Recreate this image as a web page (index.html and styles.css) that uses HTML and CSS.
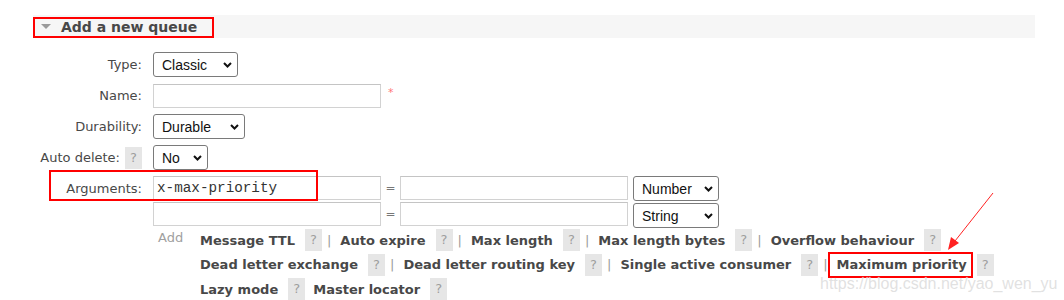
FILE: index.html
```
<!DOCTYPE html>
<html lang="en">
<head>
  <meta charset="UTF-8" />
  <title>Queues – Add a new queue</title>
  <meta name="viewport" content="width=device-width, initial-scale=1.0" />
  <link rel="stylesheet" href="styles.css">
</head>
<body>

  <div class="section">
    <div class="section-head">
      <span class="toggle"></span>
      <h2>Add a new queue</h2>
    </div>

    <form class="form">
      <div class="row">
        <label class="label" for="type">Type:</label>
        <span class="select" style="width: 85px">
          <select id="type"><option>Classic</option><option>Quorum</option></select>
          <svg class="chev" width="9" height="6" viewBox="0 0 9 6"><path d="M1 1 L4.5 4.5 L8 1" fill="none" stroke="#111" stroke-width="2"/></svg>
        </span>
      </div>

      <div class="row">
        <label class="label" for="name">Name:</label>
        <input class="text" type="text" id="name" />
        <span class="req">*</span>
      </div>

      <div class="row">
        <label class="label" for="durable">Durability:</label>
        <span class="select" style="width: 92px">
          <select id="durable"><option>Durable</option><option>Transient</option></select>
          <svg class="chev" width="9" height="6" viewBox="0 0 9 6"><path d="M1 1 L4.5 4.5 L8 1" fill="none" stroke="#111" stroke-width="2"/></svg>
        </span>
      </div>

      <div class="row">
        <label class="label" for="autodelete">Auto delete: <span class="help">?</span></label>
        <span class="select" style="width: 55px">
          <select id="autodelete"><option>No</option><option>Yes</option></select>
          <svg class="chev" width="9" height="6" viewBox="0 0 9 6"><path d="M1 1 L4.5 4.5 L8 1" fill="none" stroke="#111" stroke-width="2"/></svg>
        </span>
      </div>

      <div class="row row-args">
        <label class="label">Arguments:</label>
        <div class="args">
          <input class="text mono" type="text" value="x-max-priority" />
          <span class="eq">=</span>
          <input class="text" type="text" />
          <span class="select">
            <select><option>Number</option><option>String</option><option>Boolean</option><option>List</option></select>
            <svg class="chev" width="9" height="6" viewBox="0 0 9 6"><path d="M1 1 L4.5 4.5 L8 1" fill="none" stroke="#111" stroke-width="2"/></svg>
          </span>

          <input class="text" type="text" />
          <span class="eq">=</span>
          <input class="text" type="text" />
          <span class="select low">
            <select><option>String</option><option>Number</option><option>Boolean</option><option>List</option></select>
            <svg class="chev" width="9" height="6" viewBox="0 0 9 6"><path d="M1 1 L4.5 4.5 L8 1" fill="none" stroke="#111" stroke-width="2"/></svg>
          </span>
        </div>
      </div>

      <div class="opts">
        <span class="add">Add</span>
        <div class="opt-list">
          <div class="opt-row">
            <a class="opt">Message TTL</a><span class="help">?</span><span class="sep">|</span>
            <a class="opt">Auto expire</a><span class="help">?</span><span class="sep">|</span>
            <a class="opt">Max length</a><span class="help">?</span><span class="sep">|</span>
            <a class="opt">Max length bytes</a><span class="help">?</span><span class="sep">|</span>
            <a class="opt">Overflow behaviour</a><span class="help">?</span>
          </div>
          <div class="opt-row">
            <a class="opt">Dead letter exchange</a><span class="help">?</span><span class="sep">|</span>
            <a class="opt">Dead letter routing key</a><span class="help">?</span><span class="sep">|</span>
            <a class="opt">Single active consumer</a><span class="help">?</span><span class="sep">|</span>
            <a class="opt">Maximum priority</a><span class="help">?</span>
          </div>
          <div class="opt-row">
            <a class="opt">Lazy mode</a><span class="help gap">?</span>
            <a class="opt">Master locator</a><span class="help">?</span>
          </div>
        </div>
      </div>
    </form>
  </div>

  <!-- screenshot annotations -->
  <div class="mark mark-head"></div>
  <div class="mark mark-args"></div>
  <div class="mark mark-prio"></div>
  <svg class="arrow" width="60" height="70" viewBox="0 0 60 70">
    <line x1="53" y1="3" x2="15" y2="51" stroke="#f22" stroke-width="1" />
    <path d="M8 60 L11 47 L19 53 Z" fill="#f22" />
  </svg>
  <div class="watermark">https://blog.csdn.net/yao_wen_yu</div>

</body>
</html>
```

FILE: styles.css
```
body {
  margin: 0;
  position: relative;
  font-family: "DejaVu Sans", Verdana, sans-serif;
  font-size: 13px;
  color: #484848;
  background-color: #fff;
}

.section {
  padding-top: 15px;
}

.section-head {
  display: flex;
  align-items: center;
  margin-left: 33px;
  width: 1002px;
  height: 23px;
  background-color: #f6f6f6;
}

.toggle {
  width: 0;
  height: 0;
  margin-left: 8px;
  margin-right: 10px;
  border-left: 5px solid transparent;
  border-right: 5px solid transparent;
  border-top: 5px solid #9a9a9a;
}

.section-head h2 {
  margin: 0;
  font-size: 14px;
  font-weight: bold;
  color: #484848;
}

.form {
  margin-top: 14px;
}

.row {
  display: flex;
  align-items: center;
  height: 25px;
  margin-bottom: 6px;
}

.label {
  display: flex;
  align-items: center;
  justify-content: flex-end;
  flex: none;
  width: 142px;
  margin-right: 11px;
}

.label .help {
  margin-left: 5px;
  margin-right: 0;
}

.select {
  position: relative;
  display: inline-block;
  height: 25px;
}

.select select {
  appearance: none;
  -webkit-appearance: none;
  box-sizing: border-box;
  width: 100%;
  height: 100%;
  padding: 0 0 0 8px;
  border: 1px solid #7a7a7a;
  border-radius: 3px;
  background-color: #fff;
  font-family: "Liberation Sans", Arial, sans-serif;
  font-size: 14px;
  color: #111;
}

.chev {
  position: absolute;
  right: 6px;
  top: 10px;
  pointer-events: none;
}

.text {
  box-sizing: border-box;
  width: 228px;
  height: 24px;
  margin: 0;
  padding: 0 3px;
  border: 1px solid #d2d2d2;
  border-top-color: #c4c4c4;
  background-color: #fff;
  font-family: "Liberation Sans", Arial, sans-serif;
  font-size: 14px;
  color: #222;
}

.mono {
  font-family: "Liberation Mono", "Courier New", monospace;
  font-size: 14.3px;
  color: #333;
}

.req {
  margin-left: 7px;
  margin-top: -6px;
  font-size: 11px;
  color: #f77;
}

.row-args {
  align-items: flex-start;
  height: auto;
  margin-bottom: 0;
}

.row-args .label {
  height: 24px;
}

.args {
  display: grid;
  grid-template-columns: 228px 19px 228px 86px;
  grid-auto-rows: 24px;
  column-gap: 0;
  row-gap: 2px;
}

.args .select {
  width: 86px;
  margin-left: 5px;
}

.args .select.low {
  margin-top: 1px;
}

.eq {
  text-align: center;
  line-height: 24px;
  font-size: 12px;
  color: #777;
}

.opts {
  display: flex;
  margin-top: 3px;
  margin-left: 153px;
}

.add {
  width: 42px;
  padding-left: 5px;
  padding-top: 1px;
  color: #a0a0a0;
}

.opt-row {
  display: flex;
  align-items: center;
  height: 22px;
  margin-bottom: 2.5px;
}

.opt {
  font-weight: bold;
  color: #484848;
  cursor: pointer;
}

.help {
  display: inline-block;
  width: 17px;
  height: 22px;
  line-height: 22px;
  margin-left: 10px;
  text-align: center;
  background-color: #e6e6e6;
  color: #9e9e9e;
  font-size: 13px;
}

.help.gap {
  margin-right: 8px;
}

.sep {
  margin-left: 5px;
  margin-right: 9px;
  color: #9a9a9a;
}

/* red marks drawn over the screenshot */
.mark {
  position: absolute;
  box-sizing: border-box;
  border: 2px solid #f00;
}

.mark-head {
  left: 33px;
  top: 17px;
  width: 181px;
  height: 21px;
}

.mark-args {
  left: 49px;
  top: 170px;
  width: 269px;
  height: 31px;
}

.mark-prio {
  left: 828px;
  top: 252px;
  width: 145px;
  height: 26px;
}

.arrow {
  position: absolute;
  left: 940px;
  top: 190px;
}

.watermark {
  position: absolute;
  left: 820px;
  top: 275px;
  font-family: "Liberation Sans", Arial, sans-serif;
  font-size: 16px;
  color: rgba(200, 200, 200, 0.55);
  text-shadow: 0 0 1px rgba(255, 255, 255, 0.8);
  white-space: nowrap;
}
```
